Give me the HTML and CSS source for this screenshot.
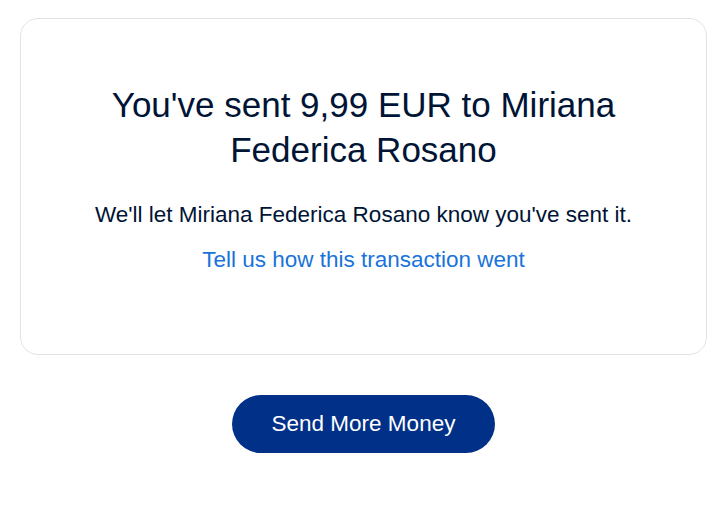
FILE: index.html
```html
<!DOCTYPE html>
<html>
<head>
<meta charset="utf-8">
<link rel="stylesheet" href="styles.css">
</head>
<body>
<div class="page">
  <div class="card">
    <h1 class="title">You've sent 9,99 EUR to Miriana Federica Rosano</h1>
    <p class="note">We'll let Miriana Federica Rosano know you've sent it.</p>
    <a class="feedback" href="#">Tell us how this transaction went</a>
  </div>
  <div class="actions">
    <button class="primary">Send More Money</button>
  </div>
</div>
</body>
</html>
```
FILE: styles.css
```css
* { box-sizing: border-box; }
html, body { margin: 0; padding: 0; background: #fff; }
body { font-family: "Liberation Sans", Arial, sans-serif; color: #001435; }
.page { padding: 18px 21px 0 20px; }
.card {
  border: 1px solid #e3e3e3;
  border-radius: 18px;
  height: 337px;
  padding: 63px 40px 0;
  display: flex;
  flex-direction: column;
  align-items: center;
  text-align: center;
}
.title {
  margin: 0;
  font-size: 35px;
  font-weight: 400;
  line-height: 45px;
  max-width: 560px;
}
.note {
  margin: 29px 0 0;
  font-size: 22.5px;
  line-height: 28px;
}
.feedback {
  margin-top: 17px;
  font-size: 22.5px;
  line-height: 28px;
  color: #1a73d9;
  text-decoration: none;
}
.actions {
  display: flex;
  justify-content: center;
  padding-top: 40px;
}
.primary {
  width: 263px;
  height: 58px;
  border: none;
  border-radius: 29px;
  background: #003087;
  color: #fff;
  font-family: "Liberation Sans", Arial, sans-serif;
  font-size: 22.5px;
}
```
